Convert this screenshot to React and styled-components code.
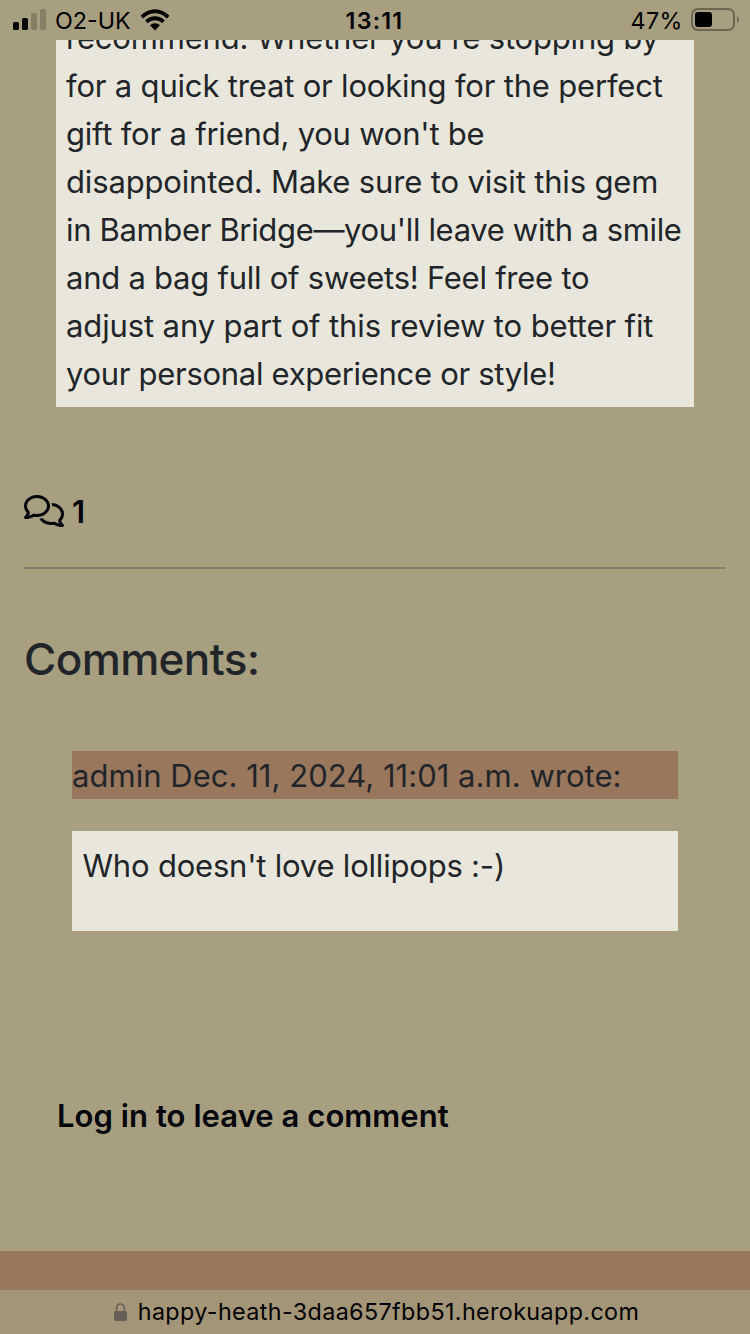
import React from "react";
import styled, { createGlobalStyle } from "styled-components";
import { FaRegComments } from "react-icons/fa6";

const GlobalStyle = createGlobalStyle`
  *, *::before, *::after { box-sizing: border-box; }
  html, body { margin: 0; background: #a89f80; }
  body { font-family: Inter, "Liberation Sans", sans-serif; color: #212529; }
  h2, p, hr { margin: 0; }
`;

const Screen = styled.div`
  width: 750px;
  height: 1334px;
  display: flex;
  flex-direction: column;
  overflow: hidden;
  background: #a89f80;
`;

const StatusBar = styled.header`
  height: 40px;
  flex: none;
  display: grid;
  grid-template-columns: 1fr auto 1fr;
  align-items: center;
  padding: 0 11px 0 13px;
  color: #000;
  font-size: 23.3px;
  line-height: 28px;
`;

const StatusGroup = styled.div`
  display: flex;
  align-items: center;
  justify-content: ${(p) => (p.$end ? "flex-end" : "flex-start")};
  gap: ${(p) => (p.$end ? 8 : 9)}px;
`;

const Time = styled.time`
  padding: 2px 3px 0 0;
  font-weight: 600;
  letter-spacing: 1.2px;
`;

const Line = styled.span`
  display: block;
  white-space: nowrap;
  letter-spacing: ${(p) => p.$track || 0}px;
`;

const StatusText = styled(Line)`
  padding-top: 2px;
`;

const Page = styled.main`
  flex: 1;
  min-height: 0;
  overflow: hidden;
  font-size: 31px;
  line-height: 48px;
`;

const Review = styled.p`
  height: 367px;
  margin: 0 56px;
  padding: 0 10px 9px;
  overflow: hidden;
  display: flex;
  flex-direction: column;
  justify-content: flex-end;
  background: #e9e7db;
`;

const CommentCount = styled.div`
  display: flex;
  align-items: center;
  gap: 8px;
  height: 48px;
  margin: 80px 24px 0;
  color: #000308;
  font-weight: 600;
`;

const Count = styled.span`
  padding-top: 2px;
`;

const CommentsIcon = styled(FaRegComments)`
  width: 40px;
  height: 32px;
`;

const Divider = styled.hr`
  height: 2px;
  margin: 32px 24px 0;
  border: 0;
  background: #877f6a;
`;

const Heading = styled.h2`
  margin: 63px 24px 0;
  font-size: 44px;
  line-height: 54px;
  font-weight: 500;
`;

const Comment = styled.article`
  margin: 65px 72px 0;
`;

const Author = styled.div`
  height: 48px;
  padding-top: 1px;
  background: #99775c;
`;

const CommentBody = styled.p`
  height: 100px;
  margin-top: 32px;
  padding: 11px 10.5px;
  background: #e9e7db;
`;

const LoginPrompt = styled.p`
  margin: 161px 57px 0;
  color: #000308;
  font-weight: 600;
`;

const Footer = styled.footer`
  flex: none;
  height: 39px;
  border-bottom: 1px solid #8b7a60;
  background: #99775c;
`;

const AddressBar = styled.div`
  flex: none;
  height: 44px;
  display: flex;
  align-items: center;
  justify-content: center;
  gap: 11px;
  padding-left: 3px;
  background: #a39577;
  color: #000;
  font-size: 23.3px;
  line-height: 42px;
`;

const review = [
  ["recommend. Whether you're stopping by", -0.19],
  ["for a quick treat or looking for the perfect", -0.18],
  ["gift for a friend, you won't be", -0.21],
  ["disappointed. Make sure to visit this gem", -0.15],
  ["in Bamber Bridge—you'll leave with a smile", -0.34],
  ["and a bag full of sweets! Feel free to", -0.25],
  ["adjust any part of this review to better fit", -0.12],
  ["your personal experience or style!", -0.3],
];

const Signal = () => (
  <svg width="33" height="22" viewBox="0 0 33 22">
    <rect x="0" y="13" width="6" height="8" rx="1.6" />
    <rect x="9" y="9" width="6" height="12" rx="1.6" />
    <rect x="18" y="4" width="6" height="17" rx="1.6" fill="#887e66" />
    <rect x="27" y="0" width="6" height="21" rx="1.6" fill="#887e66" />
  </svg>
);

const Wifi = () => (
  <svg width="30" height="22" viewBox="0 0 30 22">
    <path d="M0.5 6.8C8.5-1.9 21.5-1.9 29.5 6.8L26.8 9.5C20.2 2.6 9.8 2.6 3.2 9.5Z" />
    <path d="M5.2 11.5C10.7 5.9 19.3 5.9 24.8 11.5L22.1 14.2C18.1 10.4 11.9 10.4 7.9 14.2Z" />
    <path d="M10 16.3C12.8 13.6 17.2 13.6 20 16.3L15 21.4Z" />
  </svg>
);

const Battery = () => (
  <svg width="48" height="24" viewBox="0 0 48 24">
    <rect x="1" y="1" width="42" height="21" rx="6" fill="none" stroke="#6c6652" strokeWidth="2" />
    <rect x="4" y="4" width="17" height="15" rx="3" />
    <path d="M46 8Q48 9.2 48 11.5Q48 13.8 46 15Z" fill="#6c6652" />
  </svg>
);

const Lock = () => (
  <svg width="13" height="18" viewBox="0 0 13 18" fill="#675e57">
    <rect x="0" y="8" width="13" height="10" rx="1.8" />
    <path d="M2.6 9V5.2C2.6-0.4 10.4-0.4 10.4 5.2V9" fill="none" stroke="#675e57" strokeWidth="1.5" />
  </svg>
);

export default function App() {
  return (
    <>
      <GlobalStyle />
      <Screen>
        <StatusBar>
          <StatusGroup>
            <Signal />
            <StatusText>O2-UK</StatusText>
            <Wifi />
          </StatusGroup>
          <Time>13:11</Time>
          <StatusGroup $end>
            <StatusText $track={0.5}>47%</StatusText>
            <Battery />
          </StatusGroup>
        </StatusBar>
        <Page>
          <Review>
            {review.map(([text, track]) => (
              <Line key={text} $track={track}>{text}</Line>
            ))}
          </Review>
          <CommentCount>
            <CommentsIcon />
            <Count>1</Count>
          </CommentCount>
          <Divider />
          <Heading><Line $track={-0.6}>Comments:</Line></Heading>
          <Comment>
            <Author><Line $track={0.03}>admin Dec. 11, 2024, 11:01 a.m. wrote:</Line></Author>
            <CommentBody><Line $track={-0.2}>Who doesn't love lollipops :-)</Line></CommentBody>
          </Comment>
          <LoginPrompt><Line $track={0.06}>Log in to leave a comment</Line></LoginPrompt>
        </Page>
        <Footer />
        <AddressBar>
          <Lock />
          <Line $track={0.39}>happy-heath-3daa657fbb51.herokuapp.com</Line>
        </AddressBar>
      </Screen>
    </>
  );
}
